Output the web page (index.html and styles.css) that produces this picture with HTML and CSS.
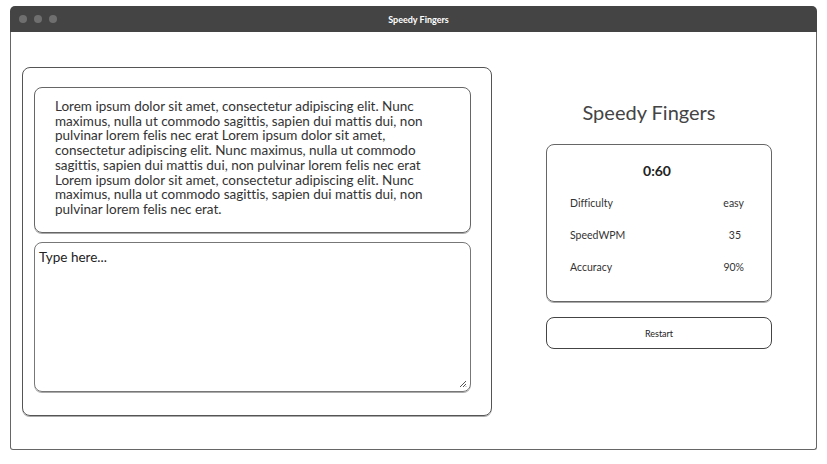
FILE: index.html
```html
<!DOCTYPE html>
<html>
<head>
<meta charset="utf-8">
<link rel="stylesheet" href="styles.css">
</head>
<body>
<div class="window">
  <div class="titlebar">
    <div class="dots"><span class="dot"></span><span class="dot"></span><span class="dot"></span></div>
    <div class="wtitle">Speedy Fingers</div>
    <div></div>
  </div>
  <div class="content">
    <div class="card">
      <div class="passage">Lorem ipsum dolor sit amet, consectetur adipiscing elit. Nunc maximus, nulla ut commodo sagittis, sapien dui mattis dui, non pulvinar lorem felis nec erat Lorem ipsum dolor sit amet, consectetur adipiscing elit. Nunc maximus, nulla ut commodo sagittis, sapien dui mattis dui, non pulvinar lorem felis nec erat Lorem ipsum dolor sit amet, consectetur adipiscing elit. Nunc maximus, nulla ut commodo sagittis, sapien dui mattis dui, non pulvinar lorem felis nec erat.</div>
      <div class="typebox">
        <span class="placeholder">Type here...</span>
        <svg class="grip" width="8" height="8" viewBox="0 0 8 8"><path d="M7 1 L1 7 M7 4 L4 7 M7 6.5 L6.5 7" stroke="#555" stroke-width="1"/></svg>
      </div>
    </div>
    <div class="side">
      <h1 class="apptitle">Speedy Fingers</h1>
      <div class="stats">
        <div class="timer">0:60</div>
        <div class="row"><span>Difficulty</span><span>easy</span></div>
        <div class="row"><span>SpeedWPM</span><span class="v35">35</span></div>
        <div class="row"><span>Accuracy</span><span>90%</span></div>
      </div>
      <button class="restart">Restart</button>
    </div>
  </div>
</div>
</body>
</html>
```

FILE: styles.css
```css
html, body { margin: 0; padding: 0; background: #fff; }
body { font-family: "Lato", "Liberation Sans", sans-serif; color: #333; font-variant-ligatures: none; }
.window { margin: 6px 10px 0 10px; width: 807px; }
.titlebar {
  height: 26px; background: #444; border-radius: 5px 5px 0 0;
  display: grid; grid-template-columns: 1fr auto 1fr; align-items: center;
}
.dots { display: flex; gap: 7px; padding-left: 9px; }
.dot { width: 8px; height: 8px; border-radius: 50%; background: #6f6f6f; }
.wtitle { color: #fff; font-size: 9px; font-weight: bold; padding-left: 10px; }
.content {
  height: 418px; border: 1px solid #666; border-top: none; border-radius: 0 0 3px 3px;
  display: flex; align-items: flex-start; padding: 35px 0 0 11px; box-sizing: border-box;
}
.card {
  width: 470px; height: 349px; box-sizing: border-box; border: 1px solid #555; border-radius: 8px;
  padding: 19px 20px 0 11px; display: flex; flex-direction: column; gap: 9px;
  box-shadow: 0 1px 0 #aaa;
}
.passage {
  height: 146px; box-sizing: border-box; border: 1px solid #666; border-radius: 8px;
  padding: 11px 18px 0 20px; font-size: 13.5px; line-height: 14.7px; color: #333;
  box-shadow: 0 1px 0 #aaa;
}
.typebox {
  position: relative; height: 150px; box-sizing: border-box; border: 1px solid #777; border-radius: 8px;
  padding: 3px 4px; box-shadow: 0 1px 0 #aaa;
}
.placeholder { font-size: 13.5px; color: #222; }
.grip { position: absolute; right: 3px; bottom: 3px; }
.side { margin-left: 54px; width: 226px; display: flex; flex-direction: column; }
.apptitle { margin: 33px 0 0 0; padding-right: 20px; font-size: 20px; font-weight: 400; text-align: center; color: #444; line-height: 24px; }
.stats {
  margin-top: 20px; height: 158px; box-sizing: border-box; border: 1px solid #666; border-radius: 8px;
  padding: 17px 27px 0 23px; box-shadow: 0 1px 0 #aaa;
}
.timer { text-align: center; font-size: 14px; font-weight: bold; color: #222; line-height: 18px; margin-bottom: 17px; }
.row { display: flex; justify-content: space-between; font-size: 10.5px; line-height: 12px; height: 32px; color: #333; }
.v35 { margin-right: 3px; }
.restart {
  margin-top: 15px; height: 32px; border: 1px solid #444; border-radius: 8px; background: #fff;
  font-family: "Lato", "Liberation Sans", sans-serif; font-size: 9px; color: #222;
}
```
